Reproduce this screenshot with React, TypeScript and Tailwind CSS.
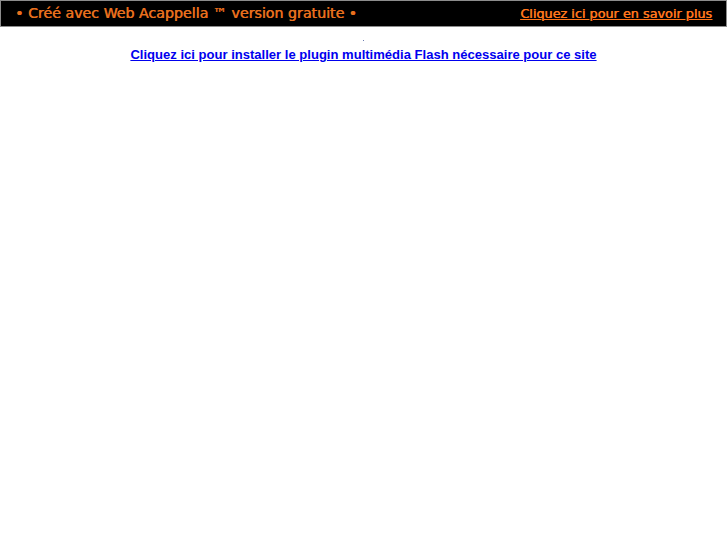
export default function App() {
  return (
    <div className="min-h-[545px] bg-white">
      <div
        className="flex h-[27px] items-center justify-between border border-[#8c8c8c] bg-black pl-[14px] pr-[14px]"
        style={{ fontFamily: '"DejaVu Sans", sans-serif' }}
      >
        <span className="text-[14.2px] text-[#e8701e] [text-shadow:0.5px_0_0_#e8701e]">
          • Créé avec Web Acappella ™ version gratuite •
        </span>
        <a href="#" className="text-[12.8px] text-[#ff761c] underline [text-shadow:0.5px_0_0_#ff761c]">
          Cliquez ici pour en savoir plus
        </a>
      </div>
      <div className="flex flex-col items-center pt-[13px]">
        <div className="h-px w-px bg-[#6a7ab0]" />
        <a
          href="#"
          className="mt-[4px] text-[13.05px] font-bold text-[#0000ee] underline"
          style={{ fontFamily: '"Liberation Sans", Arial, sans-serif' }}
        >
          Cliquez ici pour installer le plugin multimédia Flash nécessaire pour ce site
        </a>
      </div>
    </div>
  );
}
